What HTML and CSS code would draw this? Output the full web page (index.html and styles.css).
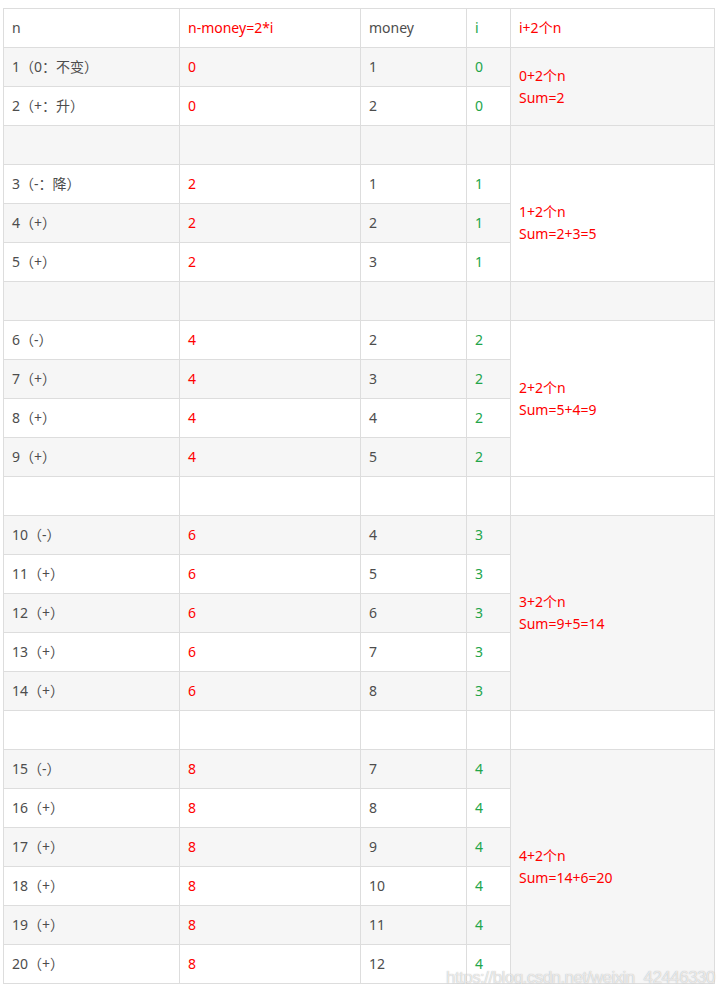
FILE: index.html
```html
<!DOCTYPE html>
<html lang="zh-CN">
<head>
<meta charset="utf-8">
<title>table</title>
<link rel="stylesheet" href="styles.css">
</head>
<body>
<div class="page">
<table class="grid">
  <colgroup>
    <col class="c1"><col class="c2"><col class="c3"><col class="c4"><col class="c5">
  </colgroup>
  <tr><td>n</td><td class="red">n-money=2*i</td><td>money</td><td class="green">i</td><td class="red">i+2个n</td></tr>
  <tr><td>1（0：不变）</td><td class="red">0</td><td>1</td><td class="green">0</td><td class="red" rowspan="2">0+2个n<br>Sum=2</td></tr>
  <tr><td>2（+：升）</td><td class="red">0</td><td>2</td><td class="green">0</td></tr>
  <tr class="gap"><td>&nbsp;</td><td></td><td></td><td></td><td></td></tr>
  <tr><td>3（-：降）</td><td class="red">2</td><td>1</td><td class="green">1</td><td class="red" rowspan="3">1+2个n<br>Sum=2+3=5</td></tr>
  <tr><td>4（+）</td><td class="red">2</td><td>2</td><td class="green">1</td></tr>
  <tr><td>5（+）</td><td class="red">2</td><td>3</td><td class="green">1</td></tr>
  <tr class="gap"><td>&nbsp;</td><td></td><td></td><td></td><td></td></tr>
  <tr><td>6（-）</td><td class="red">4</td><td>2</td><td class="green">2</td><td class="red" rowspan="4">2+2个n<br>Sum=5+4=9</td></tr>
  <tr><td>7（+）</td><td class="red">4</td><td>3</td><td class="green">2</td></tr>
  <tr><td>8（+）</td><td class="red">4</td><td>4</td><td class="green">2</td></tr>
  <tr><td>9（+）</td><td class="red">4</td><td>5</td><td class="green">2</td></tr>
  <tr class="gap"><td>&nbsp;</td><td></td><td></td><td></td><td></td></tr>
  <tr><td>10（-）</td><td class="red">6</td><td>4</td><td class="green">3</td><td class="red" rowspan="5">3+2个n<br>Sum=9+5=14</td></tr>
  <tr><td>11（+）</td><td class="red">6</td><td>5</td><td class="green">3</td></tr>
  <tr><td>12（+）</td><td class="red">6</td><td>6</td><td class="green">3</td></tr>
  <tr><td>13（+）</td><td class="red">6</td><td>7</td><td class="green">3</td></tr>
  <tr><td>14（+）</td><td class="red">6</td><td>8</td><td class="green">3</td></tr>
  <tr class="gap"><td>&nbsp;</td><td></td><td></td><td></td><td></td></tr>
  <tr><td>15（-）</td><td class="red">8</td><td>7</td><td class="green">4</td><td class="red" rowspan="6">4+2个n<br>Sum=14+6=20</td></tr>
  <tr><td>16（+）</td><td class="red">8</td><td>8</td><td class="green">4</td></tr>
  <tr><td>17（+）</td><td class="red">8</td><td>9</td><td class="green">4</td></tr>
  <tr><td>18（+）</td><td class="red">8</td><td>10</td><td class="green">4</td></tr>
  <tr><td>19（+）</td><td class="red">8</td><td>11</td><td class="green">4</td></tr>
  <tr><td>20（+）</td><td class="red">8</td><td>12</td><td class="green">4</td></tr>
</table>
<div class="watermark">https://blog.csdn.net/weixin_42446330</div>
</div>
</body>
</html>
```

FILE: styles.css
```css
html, body {
  margin: 0;
  padding: 0;
  background: #fff;
}
.page {
  position: relative;
  padding: 8px 0 0 3px;
  font-family: "Noto Sans", "Noto Sans CJK SC", sans-serif;
  font-size: 14px;
  color: #4d4d4d;
}
.grid {
  border-collapse: collapse;
  table-layout: fixed;
  width: 711px;
}
.c1 { width: 176px; }
.c2 { width: 181px; }
.c3 { width: 106px; }
.c4 { width: 44px; }
.c5 { width: 204px; }
.grid td {
  border: 1px solid #ddd;
  padding: 8px;
  line-height: 22px;
  vertical-align: middle;
  text-align: left;
}
.grid tr:nth-child(even) td {
  background: #f6f6f6;
}
.red { color: #f00; }
.green { color: #22a54a; }
.watermark {
  position: absolute;
  left: 446px;
  top: 968px;
  font-family: "Liberation Sans", "Noto Sans", sans-serif;
  font-size: 17px;
  letter-spacing: -0.55px;
  color: rgba(255, 255, 255, 0.7);
  text-shadow: 0 0 1px rgba(150, 150, 150, 0.8);
  white-space: nowrap;
}
```
